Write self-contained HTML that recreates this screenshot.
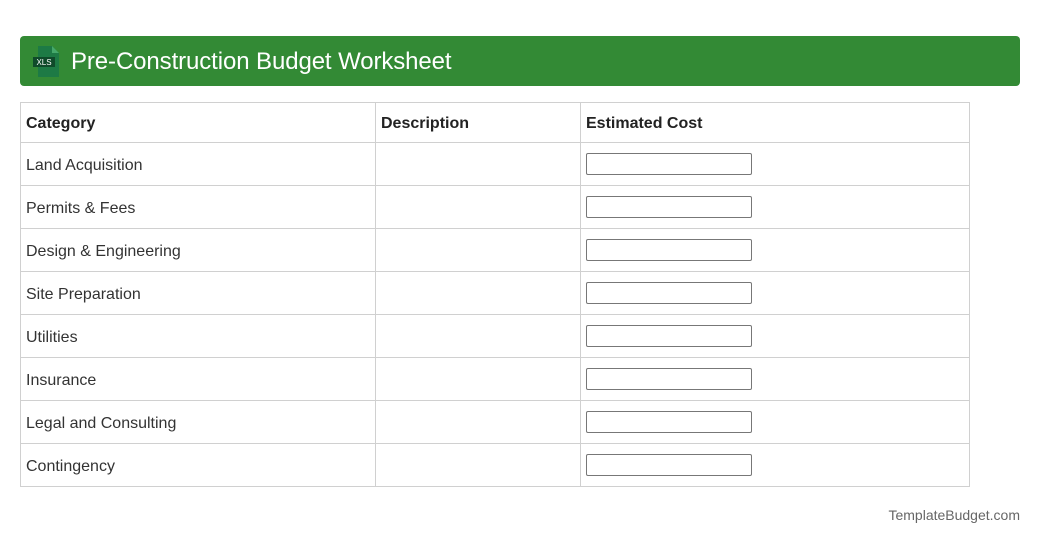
<!DOCTYPE html>
<html><head><meta charset="utf-8"><style>
body{margin:0;background:#fff;font-family:"Liberation Sans",Roboto,sans-serif;color:#333;width:1040px;height:544px;position:relative}
.hdr{position:absolute;left:20px;top:36px;width:1000px;height:50px;background:#338a35;border-radius:4px}
.hdr .t{position:absolute;left:51px;top:12px;font-size:24px;color:#fff;line-height:28px;letter-spacing:-0.1px}
.ic{position:absolute;left:13px;top:10px}
table{position:absolute;left:20px;top:102px;border-collapse:collapse;width:950px}
td,th{border:1px solid #d0d0d0;padding:3px 5px 0;font-size:16px;text-align:left;height:39px}
th{height:36px;font-weight:bold;color:#222}
.c1{width:344px}.c2{width:194px}
.in{width:164px;height:20px;border:1px solid #777;border-radius:2px;display:block;margin-top:-3px}
.ft{position:absolute;right:20px;top:507px;font-size:14px;color:#666}
</style></head><body>
<div class="hdr">
<svg class="ic" width="27" height="31" viewBox="0 0 27 31"><path d="M5 0H19L26 7V31H5Z" fill="#1d7a45"/><path d="M19 0V7H26Z" fill="#45a86a"/><rect x="0" y="11" width="22" height="10" fill="#0f4a2a"/><text x="11" y="19" font-size="8" fill="#fff" text-anchor="middle" font-family="Liberation Sans">XLS</text></svg>
<div class="t">Pre-Construction Budget Worksheet</div></div>
<table>
<tr><th class="c1">Category</th><th class="c2">Description</th><th>Estimated Cost</th></tr>
<tr><td>Land Acquisition</td><td></td><td><span class="in"></span></td></tr>
<tr><td>Permits &amp; Fees</td><td></td><td><span class="in"></span></td></tr>
<tr><td>Design &amp; Engineering</td><td></td><td><span class="in"></span></td></tr>
<tr><td>Site Preparation</td><td></td><td><span class="in"></span></td></tr>
<tr><td>Utilities</td><td></td><td><span class="in"></span></td></tr>
<tr><td>Insurance</td><td></td><td><span class="in"></span></td></tr>
<tr><td>Legal and Consulting</td><td></td><td><span class="in"></span></td></tr>
<tr><td>Contingency</td><td></td><td><span class="in"></span></td></tr>
</table>
<div class="ft">TemplateBudget.com</div>
</body></html>
